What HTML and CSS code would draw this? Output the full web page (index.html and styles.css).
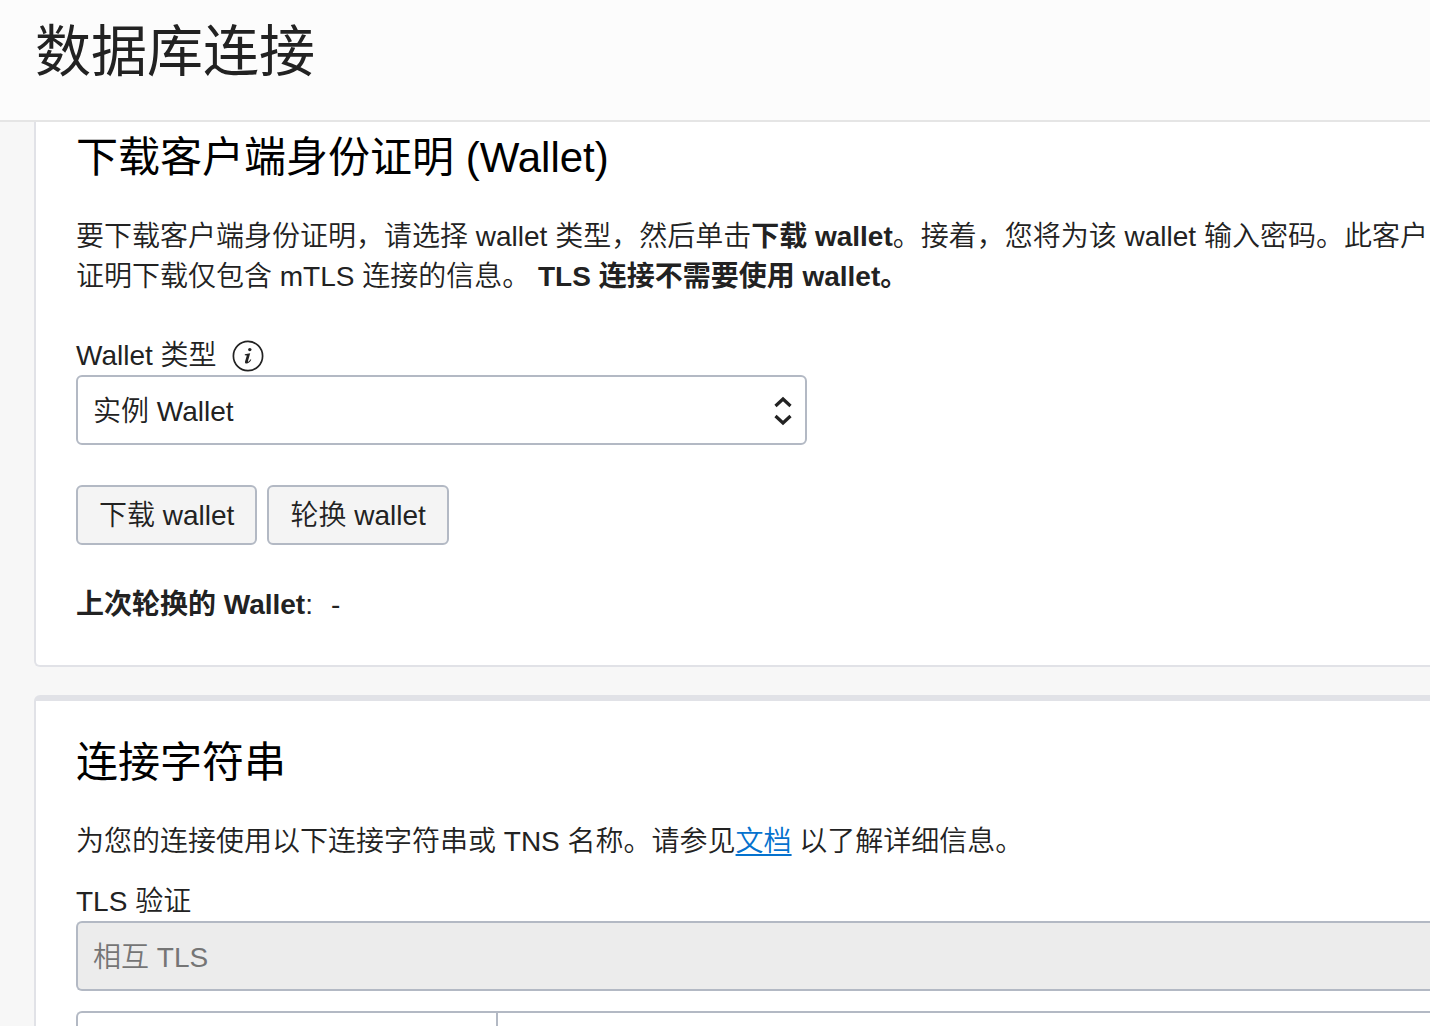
FILE: index.html
```html
<!DOCTYPE html>
<html lang="zh-CN">
<head>
<meta charset="utf-8">
<meta name="viewport" content="width=device-width, initial-scale=1">
<title>数据库连接</title>
<link rel="stylesheet" href="styles.css">
</head>
<body>
<header class="page-header">
  <h1 class="page-title">数据库连接</h1>
</header>
<main class="content">
  <section class="card card-first">
    <h2 class="card-title">下载客户端身份证明 (Wallet)</h2>
    <p class="text">要下载客户端身份证明，请选择 wallet 类型，然后单击<strong>下载 wallet</strong>。接着，您将为该 wallet 输入密码。此客户<br>证明下载仅包含 mTLS 连接的信息。 <strong>TLS 连接不需要使用 wallet。</strong></p>
    <div class="field field-short">
      <div class="label-row">
        <label for="wallet-type">Wallet 类型</label>
        <svg class="info" viewBox="0 0 32 32" aria-hidden="true">
          <circle cx="16" cy="16" r="14.6" fill="none" stroke="currentColor" stroke-width="1.7"/>
          <circle cx="17.8" cy="9.6" r="1.7" fill="currentColor"/>
          <path d="M12.8 14.3 L18.2 13.3 L16 21 Q15.7 22.3 16.6 21.6 Q17.7 20.7 18.6 19.2 L19.3 19.7 Q17 23.5 14.6 23.5 Q12.5 23.5 13.1 21.2 L14.8 15.4 L12.8 15.2 Z" fill="currentColor"/>
        </svg>
      </div>
      <div class="select-wrap">
        <select id="wallet-type" class="select"><option>实例 Wallet</option></select>
        <svg class="arrows" viewBox="0 0 18 30" aria-hidden="true">
          <path d="M1.5 10 L9 3 L16.5 10 M1.5 20 L9 27 L16.5 20" fill="none" stroke="currentColor" stroke-width="3.2"/>
        </svg>
      </div>
    </div>
    <div class="actions">
      <button type="button" class="button">下载 wallet</button>
      <button type="button" class="button">轮换 wallet</button>
    </div>
    <p class="text rotated"><span><strong>上次轮换的 Wallet</strong>:</span><span>-</span></p>
  </section>
  <section class="card card-second">
    <h2 class="card-title">连接字符串</h2>
    <p class="text">为您的连接使用以下连接字符串或 TNS 名称。请参见<a class="link" href="#docs">文档</a> 以了解详细信息。</p>
    <div class="field field-wide">
      <div class="label-row"><label for="tls">TLS 验证</label></div>
      <select id="tls" class="select" disabled><option>相互 TLS</option></select>
    </div>
    <div class="grid-frame">
      <table class="grid">
        <tbody><tr><td class="name-cell"></td><td></td></tr></tbody>
      </table>
    </div>
  </section>
</main>
</body>
</html>
```
FILE: styles.css
```css
* { box-sizing: border-box; }

body {
  margin: 0;
  height: 100vh;
  overflow: hidden;
  background: #f7f7f7;
  color: #222;
  font-family: "Liberation Sans", "Noto Sans CJK SC", sans-serif;
  font-size: 28px;
  font-weight: 350;
  line-height: 40px;
}

h1, h2, p { margin: 0; }

.page-header {
  padding: 20px 35px 36px;
  background: #fcfcfc;
  border-bottom: 2px solid #e5e5e5;
}

.page-title {
  font-size: 56px;
  font-weight: 400;
  line-height: 64px;
}

/* The cards are flush with the right edge of the window. */
.content { margin-left: 34px; }

.card {
  padding: 0 0 40px 40px;
  background: #fff;
  border: 2px solid #e1e2e7;
  border-right: 0;
  border-radius: 6px 0 0 6px;
}

.card-first {
  border-top: 0;
  border-top-left-radius: 0;
  padding-top: 8px;
}

.card-second {
  margin-top: 28px;
  border-top-width: 6px;
  padding-top: 34px;
}

.card-title {
  margin-bottom: 31px;
  color: #000;
  font-size: 42px;
  font-weight: 400;
  line-height: 56px;
}

.text { white-space: nowrap; }

.field { display: flex; flex-direction: column; }
.field-short { width: 731px; max-width: 100%; margin-top: 39px; }
.field-wide { margin-top: 20px; }

.label-row {
  display: flex;
  align-items: center;
  gap: 15px;
  height: 39px;
}

.info { width: 32px; height: 32px; }

.select-wrap { position: relative; }

.select {
  display: block;
  appearance: none;
  width: 100%;
  height: 70px;
  padding: 4px 15px 0;
  color: #222;
  background: #fff;
  border: 2px solid #b3b9c4;
  border-radius: 6px;
  font: inherit;
}

.field-wide .select {
  border-right: 0;
  border-radius: 6px 0 0 6px;
}

.select:disabled {
  color: #757575;
  background: #ececec;
  opacity: 1;
}

.arrows {
  position: absolute;
  top: 21px;
  right: 15px;
  width: 18px;
  height: 30px;
  pointer-events: none;
}

.actions { display: flex; gap: 10px; margin-top: 40px; }

.button {
  height: 60px;
  padding: 2px 21px 0;
  color: #222;
  background: #f4f4f4;
  border: 2px solid #b3b9c4;
  border-radius: 6px;
  font: inherit;
}

.rotated { display: flex; gap: 18px; margin-top: 40px; }

.link { color: #0572ce; text-decoration-thickness: 2px; text-underline-offset: 3px; }

.grid-frame {
  margin-top: 20px;
  border: 2px solid #b3b9c4;
  border-right: 0;
  border-radius: 6px 0 0 6px;
}

.grid { width: 100%; border-collapse: collapse; table-layout: fixed; }
.grid td { height: 60px; padding: 0; }
.grid .name-cell { width: 419px; border-right: 2px solid #b3b9c4; }
```
